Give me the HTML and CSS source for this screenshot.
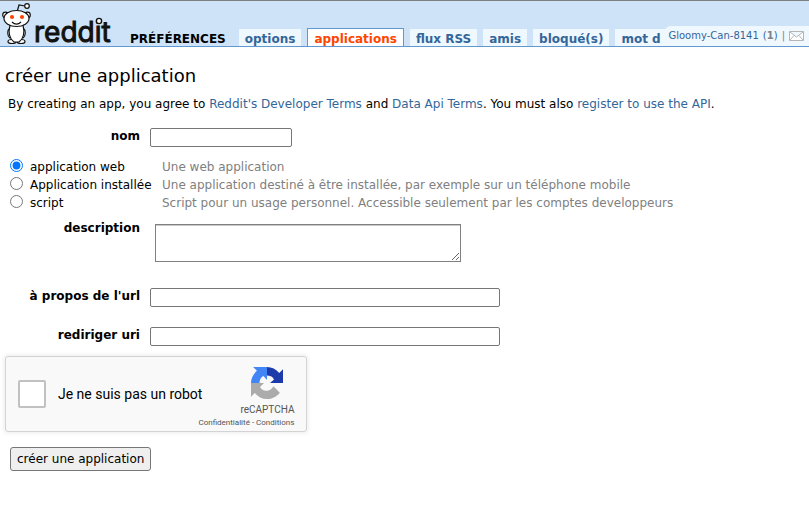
FILE: index.html
```html
<!DOCTYPE html>
<html lang="fr">
<head>
<meta charset="utf-8">
<meta name="viewport" content="width=device-width, initial-scale=1">
<title>préférences : applications</title>
<link rel="stylesheet" href="styles.css">
</head>
<body>
<header class="header">
  <a class="logo" href="#" aria-label="reddit">
    <svg width="120" height="45" viewBox="0 0 120 45">
      <g fill="#fff" stroke="#111" stroke-width="1.2">
        <path d="M17 11 19 4l6 1" fill="none"/>
        <circle cx="27" cy="5" r="2.3"/>
        <circle cx="5.500" cy="14" r="2.800"/><circle cx="27.500" cy="14" r="2.800"/>
        <ellipse cx="12" cy="40.500" rx="4" ry="2"/><ellipse cx="21" cy="40.500" rx="4" ry="2"/>
        <path d="M10 27c-3 2-3 8 0 10M23 27c3 2 3 8 0 10"/>
        <path d="M10 24h13c2 8 0 14-4 17h-5c-4-3-6-9-4-17z"/>
        <ellipse cx="16.500" cy="17.500" rx="12.500" ry="8"/>
        <path d="M12 21c3 3 6 3 9 0" fill="none"/>
      </g>
      <circle cx="12" cy="16" r="2.100" fill="#ff4500"/><circle cx="22" cy="16" r="2.100" fill="#ff4500"/>
      <text class="wordmark" x="34" y="41">reddit</text>
      <circle cx="99" cy="20" r="2.600" fill="#fff" stroke="#111" stroke-width="1.400"/>
    </svg>
  </a>
  <span class="pagename">PRÉFÉRENCES</span>
  <nav class="tabs">
    <a href="#">options</a>
    <a href="#" class="selected">applications</a>
    <a href="#">flux RSS</a>
    <a href="#">amis</a>
    <a href="#">bloqué(s)</a>
    <a href="#">mot d</a>
  </nav>
  <div class="user">
    <a href="#">Gloomy-Can-8141</a>
    <span class="karma">(<b>1</b>)</span>
    <span class="separator">|</span>
    <a class="mail" href="#" aria-label="messages">
      <svg width="15" height="10" viewBox="0 0 15 10"><path d="M.5.5h14v9H.5zM1 1l6.500 5L14 1M1 9l4-4.500M14 9l-4-4.500" fill="#fff" stroke="#b5b5b5"/></svg>
    </a>
  </div>
</header>
<main class="content">
  <h1>créer une application</h1>
  <p class="terms">By creating an app, you agree to <a href="#">Reddit's Developer Terms</a> and <a href="#">Data Api Terms</a>. You must also <a href="#">register to use the API</a>.</p>
  <form>
    <div class="field field-name"><label for="name">nom</label><input id="name" type="text"></div>
    <div class="types">
      <div class="type"><input type="radio" name="type" id="web" checked><label for="web">application web</label><span>Une web application</span></div>
      <div class="type"><input type="radio" name="type" id="installed"><label for="installed">Application installée</label><span>Une application destiné à être installée, par exemple sur un téléphone mobile</span></div>
      <div class="type"><input type="radio" name="type" id="script"><label for="script">script</label><span>Script pour un usage personnel. Accessible seulement par les comptes developpeurs</span></div>
    </div>
    <div class="field field-description"><label for="description">description</label><textarea id="description"></textarea></div>
    <div class="field field-url"><label for="about">à propos de l'url</label><input id="about" type="text"></div>
    <div class="field field-url"><label for="redirect">rediriger uri</label><input id="redirect" type="text"></div>
    <div class="captcha">
      <input type="checkbox" id="robot"><label for="robot">Je ne suis pas un robot</label>
      <div class="brand">
        <svg width="32" height="32" viewBox="0 0 64 64">
          <path fill="#1c3aa9" d="M64 32V4.500l-7.600 7.600C50.200 4.500 41.500 0 32 0v17c3 0 5.500.4 7.500 1.600 3 1.500 5 3.500 6.500 6.400L38 32z"/>
          <path fill="#4285f4" d="M32 0H4.300l7.600 7.700C4.500 13.800 0 22.600 0 32h17c0-3 .4-5.500 1.600-7.500 1.500-3 3.500-5 6.400-6.500l7 8z"/>
          <path fill="#ababab" d="M0 32v27.500l7.600-7.600C13.700 59.500 22.500 64 32 64c10.500 0 19.700-5 25.600-12.700L45 38.700c-1.200 2.300-3 4.200-5 5.700-2.200 1.700-5.300 3-9.500 3-6 0-10-3-12.500-7.400L26 32z"/>
        </svg>
        <span class="brand-name">reCAPTCHA</span>
        <span class="brand-links"><a href="#">Confidentialité</a> - <a href="#">Conditions</a></span>
      </div>
    </div>
    <button type="submit">créer une application</button>
  </form>
</main>
</body>
</html>
```
FILE: styles.css
```css
* { box-sizing: border-box; }
body { margin: 0; background: #fff; color: #000; font: 12px/18px "DejaVu Sans", sans-serif; }
a { color: #369; text-decoration: none; }

.header {
  position: relative;
  display: flex;
  align-items: flex-end;
  height: 47px;
  background: #cee3f8;
  border-top: 1px solid #808080;
  border-bottom: 1px solid #5f99cf;
  white-space: nowrap;
}
.logo { flex: none; height: 45px; margin-right: 10px; }
.logo svg { display: block; overflow: visible; }
.wordmark { font: 28px "Inter", sans-serif; fill: #111; stroke: #111; stroke-width: 1px; }
.pagename { line-height: 14px; font-weight: bold; margin-right: 13px; }
.tabs { display: flex; align-items: flex-end; gap: 6px; }
.tabs a { padding: 4px 6px 0; line-height: 13px; font-weight: bold; background: #eff7ff; }
.tabs .selected { color: #ff4500; background: #fff; border: 1px solid #5f99cf; border-bottom: 0; }
.user {
  position: absolute;
  right: 0;
  bottom: 0;
  display: flex;
  align-items: center;
  gap: 4px;
  height: 20px;
  padding: 0 5px 0 4px;
  background: #eff7ff;
  border-top-left-radius: 7px;
  font-size: 10px;
  color: #369;
}
.karma b, .separator { color: #808080; }
.mail svg { display: block; }

.content { padding: 18px 5px; }
h1 { margin: 0; font-size: 18px; line-height: 22px; font-weight: normal; }
.terms { margin: 8px 3px 15px; }
.field { display: flex; align-items: flex-start; }
.field label { width: 135px; margin-right: 10px; text-align: right; font-weight: bold; line-height: 16px; }
.field input { height: 19px; padding: 1px; border: 1px solid #767676; border-radius: 2px; }
.field-name input { width: 142px; }
.field-name { margin-bottom: 11px; }
.type { display: flex; align-items: center; height: 18px; }
.type input { flex: none; width: 13px; height: 13px; margin: 0 7px 3px 5px; }
.type label { width: 120px; margin-right: 12px; white-space: nowrap; }
.type span { color: #808080; }
.field-description { margin: 8px 0 26px; }
.field textarea { width: 306px; height: 38px; margin: 4px 0 0 5px; border: 1px solid #808080; box-shadow: inset 0 1px #c8c8c8; }
.field-url { margin-bottom: 20px; }
.field-url input { width: 350px; }
.captcha {
  display: flex;
  align-items: center;
  width: 302px;
  height: 76px;
  margin-top: -10px;
  padding: 0 12px;
  background: #f9f9f9;
  border: 1px solid #d3d3d3;
  border-radius: 3px;
  box-shadow: 0 0 4px 1px rgba(0, 0, 0, 0.08);
  font: 14px Roboto, sans-serif;
}
.captcha input { appearance: none; flex: none; width: 28px; height: 28px; margin: 0 12px 0 0; background: #fff; border: 2px solid #c1c1c1; border-radius: 2px; }
.captcha label { white-space: nowrap; }
.brand { display: flex; flex-direction: column; align-items: flex-end; width: 92px; color: #555; }
.brand svg { margin: 7px 11px 4px 0; }
.brand-name { font-size: 10px; line-height: 14px; }
.brand-links { font-size: 8px; line-height: 12px; white-space: nowrap; }
.brand-links a { color: #555; }
button { display: block; height: 24px; margin: 15px 5px 0; padding: 0 6px; background: #efefef; border: 1px solid #767676; border-radius: 3px; color: #000; font: 12px "DejaVu Sans", sans-serif; }
```
